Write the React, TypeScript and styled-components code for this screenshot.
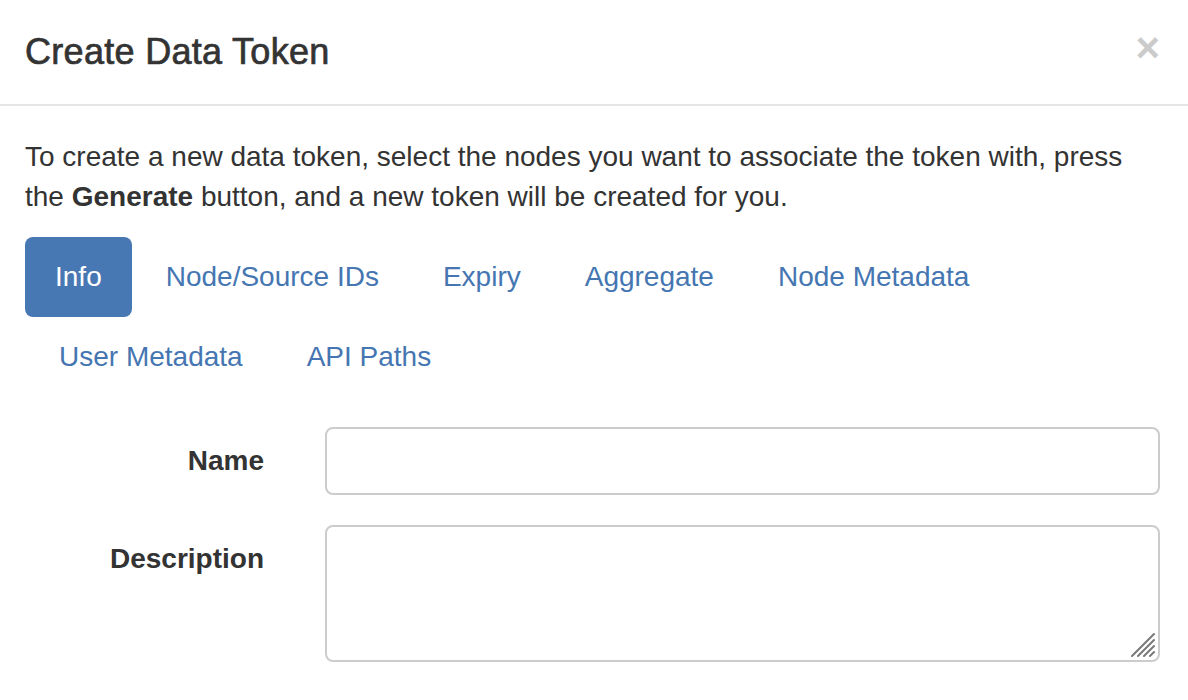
import React from 'react'
import styled, { createGlobalStyle } from 'styled-components'

const GlobalStyle = createGlobalStyle`
  html, body {
    margin: 0;
    padding: 0;
    background: #fff;
  }
  body {
    font-family: 'Liberation Sans', Arial, sans-serif;
    color: #333;
    font-size: 28px;
    line-height: 40px;
  }
`

const Modal = styled.div`
  width: 1188px;
  height: 700px;
  overflow: hidden;
  background: #fff;
`

const Header = styled.div`
  display: flex;
  align-items: center;
  justify-content: space-between;
  padding: 32px 28px 32px 25px;
  border-bottom: 2px solid #e5e5e5;
`

const Title = styled.h4`
  margin: 0;
  font-size: 36px;
  line-height: 40px;
  font-weight: 400;
  letter-spacing: 0.3px;
  -webkit-text-stroke: 0.7px #333;
  color: #333;
`

const Close = styled.button`
  border: 0;
  background: transparent;
  padding: 0;
  font-family: 'Liberation Sans', Arial, sans-serif;
  font-size: 42px;
  font-weight: bold;
  line-height: 40px;
  color: #000;
  opacity: 0.2;
  cursor: pointer;
  margin-top: -8px;
`

const Body = styled.div`
  padding: 31px 25px 0 25px;
`

const Intro = styled.p`
  margin: 0 0 20px;
`

const Pills = styled.ul`
  display: flex;
  flex-wrap: wrap;
  list-style: none;
  margin: 0;
  padding: 0;
  width: 1000px;
`

const Pill = styled.li<{ $active?: boolean }>`
  margin-left: 4px;
  padding: 20px 30px;
  line-height: 40px;
  border-radius: 8px;
  color: ${p => (p.$active ? '#fff' : '#4576b2')};
  background: ${p => (p.$active ? '#4878b3' : 'transparent')};
  cursor: pointer;

  &:first-child {
    margin-left: 0;
  }
`

const Form = styled.form`
  margin-top: 30px;
  display: grid;
  grid-template-columns: 239px 1fr;
  column-gap: 61px;
  row-gap: 30px;
  padding-right: 3px;
`

const Label = styled.label`
  font-weight: bold;
  text-align: right;
  padding-top: 14px;
  line-height: 40px;
`

const Input = styled.input`
  box-sizing: border-box;
  width: 100%;
  height: 68px;
  border: 2px solid #ccc;
  border-radius: 8px;
  font: inherit;
  padding: 12px 24px;
  outline: none;
`

const AreaWrap = styled.div`
  position: relative;
  height: 137px;
`

const Area = styled.textarea`
  box-sizing: border-box;
  width: 100%;
  height: 100%;
  border: 2px solid #ccc;
  border-radius: 8px;
  font: inherit;
  padding: 12px 24px;
  resize: none;
  outline: none;
  display: block;
`

const Grip = styled.svg`
  position: absolute;
  right: 4px;
  bottom: 4px;
  width: 26px;
  height: 26px;
  pointer-events: none;
`

const tabs = [
  'Info',
  'Node/Source IDs',
  'Expiry',
  'Aggregate',
  'Node Metadata',
  'User Metadata',
  'API Paths',
]

export default function App() {
  return (
    <Modal>
      <GlobalStyle />
      <Header>
        <Title>Create Data Token</Title>
        <Close type="button" aria-label="Close">×</Close>
      </Header>
      <Body>
        <Intro>
          To create a new data token, select the nodes you want to associate the token with, press
          the <b>Generate</b> button, and a new token will be created for you.
        </Intro>
        <Pills>
          {tabs.map((t, i) => (
            <Pill key={t} $active={i === 0}>
              {t}
            </Pill>
          ))}
        </Pills>
        <Form>
          <Label htmlFor="name">Name</Label>
          <Input id="name" type="text" />
          <Label htmlFor="desc">Description</Label>
          <AreaWrap>
            <Area id="desc" />
            <Grip viewBox="0 0 26 26">
              <g stroke="#777" strokeWidth="2" strokeLinecap="round">
                <line x1="2" y1="24" x2="24" y2="2" />
                <line x1="8" y1="24" x2="24" y2="8" />
                <line x1="14" y1="24" x2="24" y2="14" />
                <line x1="20" y1="24" x2="24" y2="20" />
              </g>
            </Grip>
          </AreaWrap>
        </Form>
      </Body>
    </Modal>
  )
}
